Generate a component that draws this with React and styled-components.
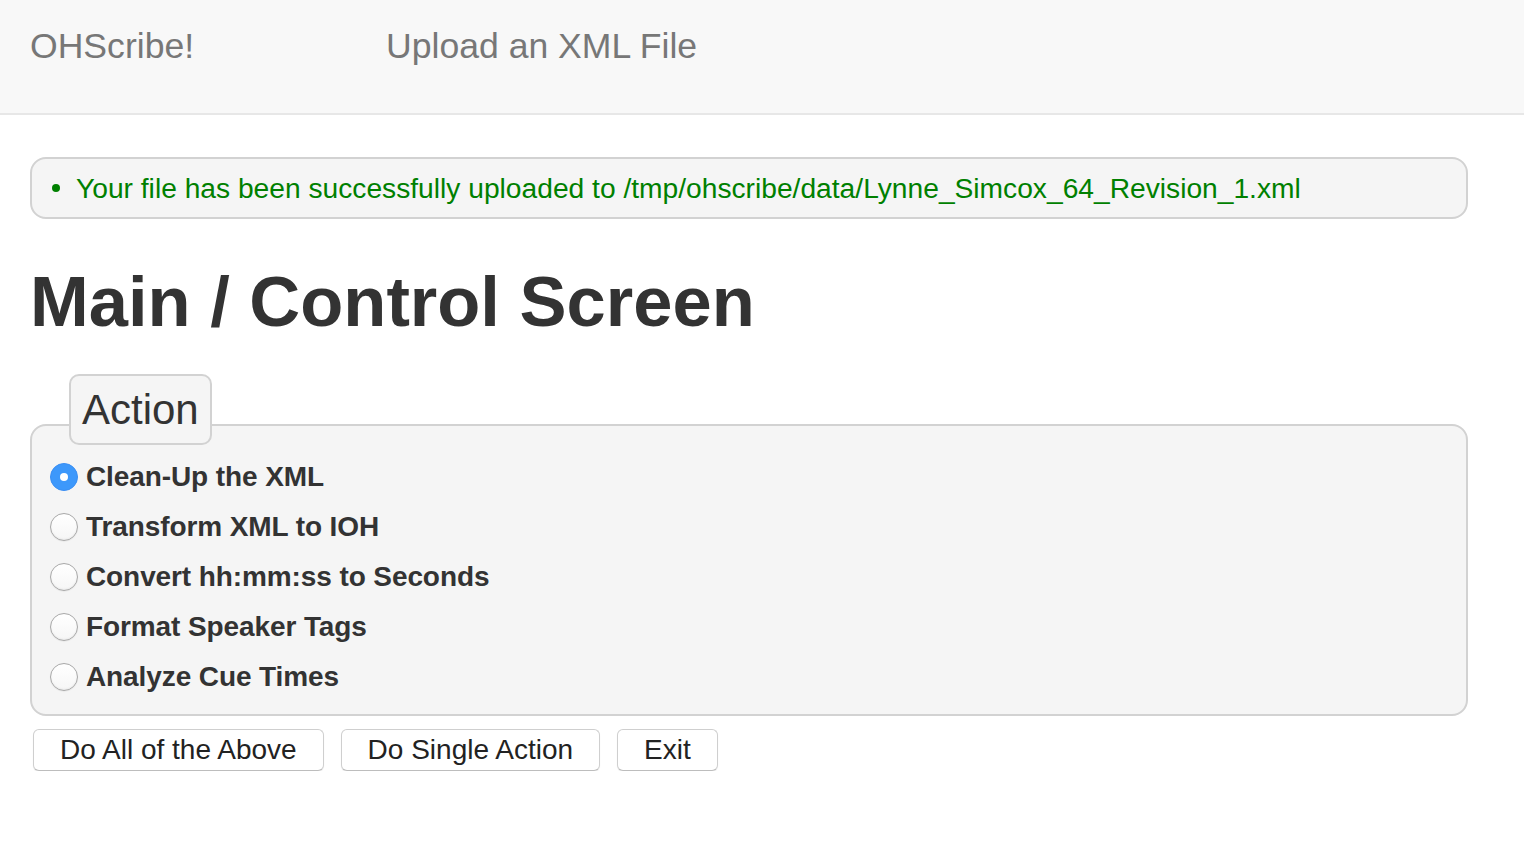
import React, { useState } from "react";
import styled, { createGlobalStyle } from "styled-components";

const GlobalStyle = createGlobalStyle`
  html, body { margin: 0; padding: 0; background: #ffffff; }
  body { font-family: "Liberation Sans", Arial, Helvetica, sans-serif; color: #333333; }
  * { box-sizing: border-box; }
`;

const Navbar = styled.nav`
  height: 115px;
  background: #f8f8f8;
  border-bottom: 2px solid #e7e7e7;
  display: flex;
  align-items: flex-start;
  padding-left: 30px;
`;

const Brand = styled.a`
  width: 356px;
  padding-top: 26px;
  font-size: 35.6px;
  line-height: 40px;
  color: #777777;
  text-decoration: none;
`;

const NavLink = styled.a`
  padding-top: 26px;
  font-size: 35.6px;
  line-height: 40px;
  color: #777777;
  text-decoration: none;
`;

const Main = styled.main`
  padding: 0 56px 0 30px;
`;

const Alert = styled.ul`
  margin: 42px 0 0;
  height: 62px;
  list-style: none;
  padding: 0 0 0 20px;
  background: #f5f5f5;
  border: 2px solid #d2d2d2;
  border-radius: 16px;
  display: flex;
  align-items: center;
`;

const AlertItem = styled.li`
  display: flex;
  align-items: center;
  gap: 16px;
  font-size: 28.2px;
  line-height: 58px;
  color: #008000;
`;

const Dot = styled.span`
  width: 8px;
  height: 8px;
  border-radius: 50%;
  background: #008000;
  flex: none;
`;

const Title = styled.h1`
  margin: 43px 0 0;
  font-size: 70.5px;
  line-height: 79px;
  font-weight: 700;
  color: #333333;
`;

const Group = styled.div`
  margin-top: 33px;
  display: flex;
  flex-direction: column;
  align-items: flex-start;
`;

const Legend = styled.div`
  position: relative;
  z-index: 1;
  margin: 0 0 -21px 39px;
  height: 71px;
  padding: 0 11px;
  font-size: 42px;
  line-height: 67px;
  color: #333333;
  background: #f5f5f5;
  border: 2px solid #d2d2d2;
  border-radius: 10px;
`;

const Box = styled.div`
  align-self: stretch;
  height: 292px;
  padding: 26px 18px 12px;
  background: #f5f5f5;
  border: 2px solid #d2d2d2;
  border-radius: 16px;
  display: flex;
  flex-direction: column;
`;

const Option = styled.label`
  height: 50px;
  display: flex;
  align-items: center;
  gap: 8px;
  font-size: 28px;
  line-height: 50px;
  font-weight: 700;
  letter-spacing: -0.1px;
  color: #333333;
  cursor: pointer;
`;

const Radio = styled.input`
  appearance: none;
  margin: 0;
  width: 28px;
  height: 28px;
  flex: none;
  border-radius: 50%;
  border: 1px solid #a8a8a8;
  background: linear-gradient(#ffffff, #f6f6f6);
  box-shadow: inset 0 -1px 2px rgba(0, 0, 0, 0.06), 0 0.5px 1px rgba(0, 0, 0, 0.08);
  display: grid;
  place-items: center;

  &:checked {
    border-color: #3a8ef3;
    background: #3d98fb;
    box-shadow: none;
  }
  &:checked::after {
    content: "";
    width: 8px;
    height: 8px;
    border-radius: 50%;
    background: #ffffff;
  }
`;

const Buttons = styled.div`
  margin: 13px 0 0 3px;
  display: flex;
  gap: 17px;
`;

const Button = styled.button`
  height: 42px;
  padding: 0 26px;
  font-family: inherit;
  font-size: 28px;
  line-height: 40px;
  color: #222222;
  background: #ffffff;
  border: 1px solid #cfcfcf;
  border-bottom-color: #bdbdbd;
  border-radius: 6px;
  box-shadow: 0 1px 1px rgba(0, 0, 0, 0.08);
  cursor: pointer;
`;

const actions = [
  "Clean-Up the XML",
  "Transform XML to IOH",
  "Convert hh:mm:ss to Seconds",
  "Format Speaker Tags",
  "Analyze Cue Times",
];

export default function App() {
  const [selected, setSelected] = useState(0);
  return (
    <>
      <GlobalStyle />
      <Navbar>
        <Brand href="#">OHScribe!</Brand>
        <NavLink href="#">Upload an XML File</NavLink>
      </Navbar>
      <Main>
        <Alert>
          <AlertItem>
            <Dot />
            Your file has been successfully uploaded to /tmp/ohscribe/data/Lynne_Simcox_64_Revision_1.xml
          </AlertItem>
        </Alert>
        <Title>Main / Control Screen</Title>
        <Group>
          <Legend>Action</Legend>
          <Box>
            {actions.map((a, i) => (
              <Option key={a}>
                <Radio
                  type="radio"
                  name="action"
                  checked={selected === i}
                  onChange={() => setSelected(i)}
                />
                {a}
              </Option>
            ))}
          </Box>
        </Group>
        <Buttons>
          <Button>Do All of the Above</Button>
          <Button>Do Single Action</Button>
          <Button>Exit</Button>
        </Buttons>
      </Main>
    </>
  );
}
